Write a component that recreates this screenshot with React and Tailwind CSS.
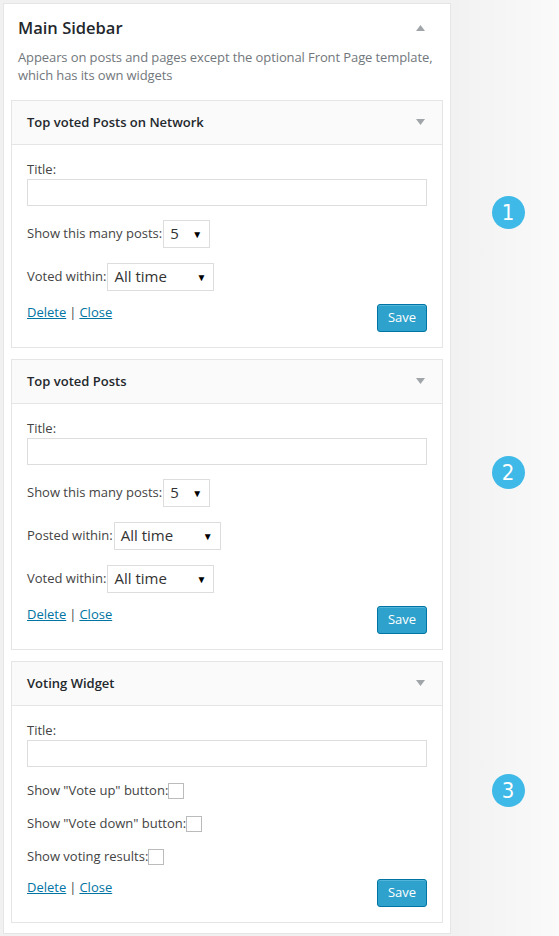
const font = { fontFamily: '"Open Sans", "Noto Sans", sans-serif' }

const Arrow = ({ up }) => (
  <svg width="9" height="6" viewBox="0 0 9 6" className="block">
    {up ? <polygon points="0,6 9,6 4.5,0" fill="#a0a5aa" /> : <polygon points="0,0 9,0 4.5,6" fill="#a0a5aa" />}
  </svg>
)

const FakeSelect = ({ value, width }) => (
  <div className={`flex items-center justify-between h-[28px] border border-[#dddddd] bg-white pl-[6px] pr-[7px] ${width}`}>
    <span className="text-[15px] text-[#333] leading-none">{value}</span>
    <span className="text-[10px] text-black leading-none">▼</span>
  </div>
)

const SelectRow = ({ label, value, width }) => (
  <div className="flex items-center">
    <span className="text-[13px] text-[#444] mr-[1px]">{label}</span>
    <FakeSelect value={value} width={width} />
  </div>
)

const CheckRow = ({ label }) => (
  <div className="flex items-center h-[18px]">
    <span className="text-[13px] text-[#444]">{label}</span>
    <span className="w-[16px] h-[16px] border border-[#bbbbbb] bg-white" />
  </div>
)

const Widget = ({ title, children }) => (
  <div className="border border-[#e5e5e5] bg-white">
    <div className="h-[44px] bg-[#fafafa] border-b border-[#e5e5e5] flex items-center justify-between pl-[15px] pr-[17px]">
      <span className="text-[13px] font-semibold text-[#23282d]">{title}</span>
      <Arrow />
    </div>
    <div className="px-[15px] pt-[15px] pb-[15px]">
      <div className="text-[13px] text-[#444] leading-[18px]">Title:</div>
      <div className="mt-[1px] h-[27px] border border-[#dddddd] bg-white" />
      {children}
      <div className="flex items-start justify-between">
        <div className="text-[13px] text-[#444] mt-[-1px]">
          <a className="text-[#0074a2] underline">Delete</a>
          <span className="mx-[3px]">|</span>
          <a className="text-[#0074a2] underline">Close</a>
        </div>
        <button className="w-[50px] h-[28px] rounded-[3px] bg-[#2ea2cc] border border-[#0074a2] text-white text-[13px] shadow-[inset_0_1px_0_rgba(120,200,230,0.5)]">
          Save
        </button>
      </div>
    </div>
  </div>
)

const Badge = ({ n }) => (
  <div className="w-[33px] h-[33px] rounded-full bg-[#3fb9e7] flex items-center justify-center text-white text-[22px] leading-none" style={{ fontFamily: '"DejaVu Sans Condensed", "Roboto", sans-serif' }}>
    {n}
  </div>
)

export default function App() {
  return (
    <div className="w-[559px] h-[936px] bg-[#f1f1f1] flex overflow-hidden" style={font}>
      <div className="pl-[3px] pt-[3px]">
        <div className="w-[448px] bg-white border border-[#e5e5e5] px-[7px] pb-[10px]">
          <div className="flex items-center justify-between pl-[7px] pr-[18px] pt-[12px]">
            <span className="text-[16.5px] text-[#23282d] font-semibold">Main Sidebar</span>
            <Arrow up />
          </div>
          <p className="pl-[7px] pt-[7px] pb-[16px] text-[13px] leading-[18px] text-[#72777c] tracking-[-0.1px]">
            Appears on posts and pages except the optional Front Page template, which has its own widgets
          </p>
          <div className="flex flex-col gap-[11px]">
            <Widget title="Top voted Posts on Network">
              <div className="pt-[14px] flex flex-col gap-[15px] pb-[13px]">
                <SelectRow label="Show this many posts:" value="5" width="w-[47px]" />
                <SelectRow label="Voted within:" value="All time" width="w-[107px]" />
              </div>
            </Widget>
            <Widget title="Top voted Posts">
              <div className="pt-[14px] flex flex-col gap-[15px] pb-[13px]">
                <SelectRow label="Show this many posts:" value="5" width="w-[47px]" />
                <SelectRow label="Posted within:" value="All time" width="w-[107px]" />
                <SelectRow label="Voted within:" value="All time" width="w-[107px]" />
              </div>
            </Widget>
            <Widget title="Voting Widget">
              <div className="pt-[15px] flex flex-col gap-[15px] pb-[13px]">
                <CheckRow label={'Show "Vote up" button:'} />
                <CheckRow label={'Show "Vote down" button:'} />
                <CheckRow label="Show voting results:" />
              </div>
            </Widget>
          </div>
        </div>
      </div>
      <div className="flex-1 bg-gradient-to-r from-[#f1f1f1] to-[#fafafa] flex flex-col items-center pl-[6px] pt-[196px]">
        <Badge n="1" />
        <div className="h-[227px]" />
        <Badge n="2" />
        <div className="h-[285px]" />
        <Badge n="3" />
      </div>
    </div>
  )
}
